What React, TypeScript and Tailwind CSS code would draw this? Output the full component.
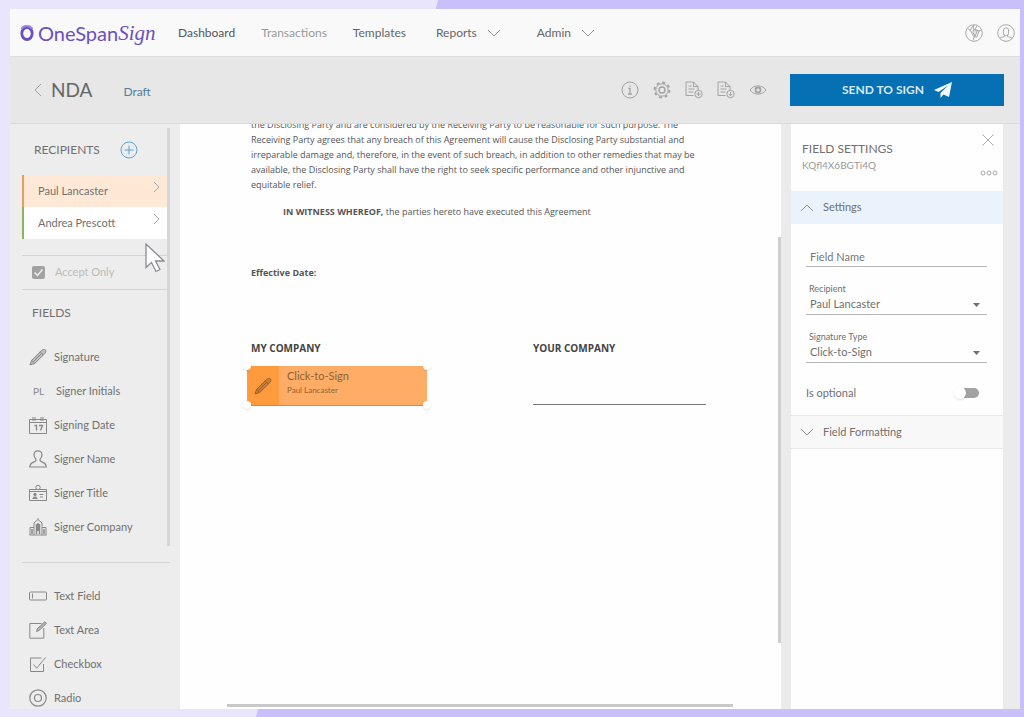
import React, { useState } from 'react';

const fieldStroke = {
  width: 18,
  height: 18,
  viewBox: '0 0 18 18',
  fill: 'none',
  stroke: 'currentColor',
  strokeWidth: 1,
  'aria-hidden': true,
} as const;

function PenIcon() {
  return (
    <svg {...fieldStroke}>
      <path d="M1 17l1.6-4.6L12.4 2.6c1.2-1.3 3.2-1.5 4-.7s.6 2.4-.8 3.9L5.8 15.4z" fill="currentColor" fillOpacity="0.45" />
      <path d="M11.2 3.8l3.2 3.2M2.6 12.4l3.2 3M4.5 13.5l8-8" />
    </svg>
  );
}

function DateIcon() {
  return (
    <svg {...fieldStroke}>
      <path d="M.5 3.5h17v14H.5zM.5 6.5h17" />
      <path d="M4 1v4M6 1v4M12 1v4M14 1v4" />
      <path d="M5.5 9.5h2v5M10 9.5h3.5l-2 5" strokeWidth="1.3" />
    </svg>
  );
}

function PersonIcon() {
  return (
    <svg {...fieldStroke} strokeWidth="1.2">
      <path d="M9 .8c-2.400 0-4 1.700-4 4 0 1.900.8 3.300 1.900 4.400.5 1.600-.6 2.300-2.300 2.900C2.300 12.900 1 13.600.7 17h16.600c-.3-3.400-1.600-4.100-3.900-4.900-1.700-.6-2.800-1.300-2.300-2.900C12.200 8.100 13 6.700 13 4.800c0-2.300-1.600-4-4-4z" />
    </svg>
  );
}

function BadgeIcon() {
  return (
    <svg {...fieldStroke}>
      <path d="M7 5.500H.5v11h17v-11H11M.5 7.500h17" />
      <circle cx="9" cy="3.500" r="2.200" />
      <path d="M7 5.500h4" />
      <circle cx="6" cy="10.500" r="1.200" fill="currentColor" />
      <path d="M3.800 14.500c0-2 4.400-2 4.400 0zM10.500 10.500h4M11 13h3" fill="currentColor" />
    </svg>
  );
}

function BuildingIcon() {
  return (
    <svg {...fieldStroke}>
      <path d="M5 17V5l4-3.500L13 5v12M9 1.500V0M1 17V9.500h4M17 17V9.500h-4M.5 17h17" />
      <path d="M7.500 6v10M9 5v8M10.500 6v10M3 11v5M15 11v5" strokeWidth="1.500" />
    </svg>
  );
}

function TextFieldIcon() {
  return (
    <svg {...fieldStroke}>
      <rect x=".5" y="5" width="17" height="8" rx="1" />
      <path d="M3.500 6.500v5" />
    </svg>
  );
}

function TextAreaIcon() {
  return (
    <svg {...fieldStroke}>
      <path d="M12.500 2.500H.8v14.700h14V7" />
      <path d="M7.500 10.500l1-3L15.800.8l1.700 1.500-7.200 7z" fill="currentColor" fillOpacity="0.6" />
    </svg>
  );
}

function CheckIcon() {
  return (
    <svg {...fieldStroke}>
      <path d="M12.500 3H1.500v13.500h13V9" />
      <path d="M4.500 9.500l3.200 3.700L16.500 2.500" />
    </svg>
  );
}

function RadioIcon() {
  return (
    <svg {...fieldStroke} strokeWidth="1.200">
      <circle cx="9" cy="9" r="8.200" />
      <circle cx="9" cy="9" r="3.500" />
    </svg>
  );
}

function Chevron({ direction }: { direction: 'up' | 'down' | 'left' | 'right' }) {
  const paths = {
    up: 'M1 9l6-6 6 6',
    down: 'M1 3l6 6 6-6',
    left: 'M9 0L3 6l6 6',
    right: 'M5 1l5 5-5 5',
  };
  return (
    <svg width="14" height="12" viewBox="0 0 14 12" fill="none" stroke="currentColor" aria-hidden="true">
      <path d={paths[direction]} />
    </svg>
  );
}

function DocIcon({ down }: { down?: boolean }) {
  return (
    <svg {...fieldStroke}>
      <path d="M8.500 14.500H1V1h7.500L13 5.500V9M8.500 1v4.500H13M3.500 5h3M3.500 8h6M3.500 11h5" />
      <circle cx="13.500" cy="13" r="3.700" />
      <path d={down ? 'M13.500 11v3.500M12 13l1.500 1.700L15 13' : 'M11.500 13h4M13.500 11v4'} />
    </svg>
  );
}

const signerFields = [
  { label: 'Signature', icon: <PenIcon /> },
  { label: 'Signer Initials', icon: null },
  { label: 'Signing Date', icon: <DateIcon /> },
  { label: 'Signer Name', icon: <PersonIcon /> },
  { label: 'Signer Title', icon: <BadgeIcon /> },
  { label: 'Signer Company', icon: <BuildingIcon /> },
];

const inputFields = [
  { label: 'Text Field', icon: <TextFieldIcon /> },
  { label: 'Text Area', icon: <TextAreaIcon /> },
  { label: 'Checkbox', icon: <CheckIcon /> },
  { label: 'Radio', icon: <RadioIcon /> },
];

function FieldList({ items }: { items: { label: string; icon: React.ReactNode }[] }) {
  return (
    <ul>
      {items.map((item) => (
        <li key={item.label}>
          <button type="button" className="flex h-[34px] w-full items-center gap-[7px] pl-[19px] text-left">
            <span className="text-[#888]">
              {item.icon ?? <span className="block w-5 pl-1 text-[10px]">PL</span>}
            </span>
            <span>{item.label}</span>
          </button>
        </li>
      ))}
    </ul>
  );
}

function TopBar() {
  return (
    <header className="flex h-12 shrink-0 items-center border-b border-[#dedede] bg-[#f9f9f9] text-[12px] text-[#666]">
      <a href="#home" className="flex w-[168px] items-center pl-[10px] text-[#6a50bd]">
        <svg width="14" height="18" viewBox="0 0 14 18" fill="none" aria-hidden="true">
          <ellipse cx="7" cy="9.500" rx="5.200" ry="6" stroke="currentColor" strokeWidth="2.800" />
          <path d="M1.500 5C3 1.500 9.500.5 12.500 5" stroke="#9b86dc" strokeWidth="2" />
        </svg>
        <span className="pl-1 text-[20px] leading-6">OneSpan</span>
        <span className="font-['Liberation_Serif',serif] text-[21px] leading-6 italic">Sign</span>
      </a>
      <nav className="flex flex-1 items-center">
        <a href="#dashboard" className="mr-[26px] text-[#555]">Dashboard</a>
        <a href="#transactions" className="mr-[26px] text-[#999]">Transactions</a>
        <a href="#templates" className="mr-[30px]">Templates</a>
        <button type="button" className="mr-9 flex items-center gap-[10px]">
          Reports <span className="text-[#999]"><Chevron direction="down" /></span>
        </button>
        <button type="button" className="flex items-center gap-[10px]">
          Admin <span className="text-[#999]"><Chevron direction="down" /></span>
        </button>
      </nav>
      <div className="flex gap-[14px] pr-[5px] text-[#aaa]">
        <button type="button" aria-label="Language">
          <svg {...fieldStroke}>
            <circle cx="9" cy="9" r="8.300" />
            <path d="M2.500 4.500L5 6l2 3.500L9 13l-1 3.500M5 6l3-4M9 1l-1 3.500 2 1 2-3.500M10 5.500l4 1.500 2.500-1M14 7l-2 6-3 0" />
            <path d="M8.500 5.500l4 1-2.500 6-2-4z" fill="currentColor" fillOpacity="0.3" />
          </svg>
        </button>
        <button type="button" aria-label="Account">
          <svg {...fieldStroke}>
            <circle cx="9" cy="9" r="8.300" />
            <rect x="6.500" y="4" width="5" height="7.500" rx="2" />
            <path d="M3 14.500c1-1.500 3-1.500 4.500-2V11M15 14.500c-1-1.500-3-1.500-4.500-2V11" />
          </svg>
        </button>
      </div>
    </header>
  );
}

function TransactionBar() {
  return (
    <div className="flex h-[67px] shrink-0 items-center border-b border-[#dadada] bg-[#e7e7e7] pr-4 pl-[22px] text-[#a2a2a2]">
      <button type="button" aria-label="Back">
        <Chevron direction="left" />
      </button>
      <h1 className="pl-[5px] text-[19px] text-[#666]">NDA</h1>
      <span className="flex-1 pt-1 pl-[31px] text-[12px] text-[#4f7f9f]">Draft</span>
      <div className="mr-[23px] flex gap-[14px]">
        <button type="button" aria-label="Information">
          <svg {...fieldStroke}>
            <circle cx="9" cy="9" r="8" />
            <path d="M7.500 7.500H9V13M7 13h4M9 4.500v1.300" strokeWidth="1.300" />
          </svg>
        </button>
        <button type="button" aria-label="Settings">
          <svg {...fieldStroke}>
            <circle cx="9" cy="9" r="7.500" strokeWidth="1.800" strokeDasharray="2.950 2.940" />
            <circle cx="9" cy="9" r="6.200" />
            <circle cx="9" cy="9" r="3" strokeWidth="1.400" />
          </svg>
        </button>
        <button type="button" aria-label="Add document"><DocIcon /></button>
        <button type="button" aria-label="Download document"><DocIcon down /></button>
        <button type="button" aria-label="Preview">
          <svg {...fieldStroke}>
            <path d="M1 9c4-5.500 12-5.500 16 0-4 5.500-12 5.500-16 0z" />
            <circle cx="9" cy="9" r="2.500" strokeWidth="1.800" />
          </svg>
        </button>
      </div>
      <button
        type="button"
        className="flex h-8 w-[214px] items-center justify-center gap-[10px] bg-[#0570b4] text-[12px] font-bold text-[#d9eaf6]"
      >
        SEND TO SIGN
        <svg width="18" height="16" viewBox="0 0 18 16" fill="#f4f9fd" aria-hidden="true">
          <path d="M18 0L0 8l4.500 2L14 3.500 6.500 11v5l3-3.500L15 15z" />
        </svg>
      </button>
    </div>
  );
}

function Sidebar() {
  const [selected, setSelected] = useState('Paul Lancaster');
  const recipients = [
    { name: 'Paul Lancaster', className: 'border-[#e2a05c]' },
    { name: 'Andrea Prescott', className: 'border-[#88b65f]' },
  ];

  return (
    <aside className="relative w-[170px] shrink-0 overflow-hidden bg-[#ededed] text-[11px] text-[#707070]">
      <div className="flex h-[51px] items-center gap-5 pl-6">
        <h2 className="text-[12px]">RECIPIENTS</h2>
        <button type="button" aria-label="Add recipient" className="text-[#5ba5d8]">
          <svg {...fieldStroke}>
            <circle cx="9" cy="9" r="8" />
            <path d="M9 4.500v9M4.500 9h9" />
          </svg>
        </button>
      </div>
      <div className="mr-3 ml-3">
        {recipients.map((r) => (
          <button
            key={r.name}
            type="button"
            onClick={() => setSelected(r.name)}
            className={`flex h-8 w-full items-center justify-between border-l-2 pr-[5px] pl-[14px] ${r.className} ${
              selected === r.name ? 'bg-[#ffe9d6]' : 'bg-white'
            }`}
          >
            {r.name}
            <span className="pb-2 text-[#aaa]"><Chevron direction="right" /></span>
          </button>
        ))}
      </div>
      <label className="mt-4 mr-[10px] ml-3 flex h-[35px] items-center gap-[10px] border-y border-[#d4d4d6] pl-[10px] text-[#bbb]">
        <span className="relative h-[13px] w-[13px]">
          <input type="checkbox" defaultChecked className="block h-[13px] w-[13px] appearance-none rounded-[2px] bg-[#a2a2a2]" />
          <svg width="13" height="13" viewBox="0 0 13 13" className="absolute inset-0" fill="none" stroke="#eee" strokeWidth="1.500" aria-hidden="true">
            <path d="M2.500 6.500l3 3 5-6" />
          </svg>
        </span>
        Accept Only
      </label>
      <h2 className="flex h-[50px] items-center pb-1 pl-[22px] text-[12px]">FIELDS</h2>
      <FieldList items={signerFields} />
      <hr className="mt-[18px] mr-[10px] mb-4 ml-3 border-[#d4d4d6]" />
      <FieldList items={inputFields} />

      {/* scroll thumb */}
      <div className="absolute top-1 right-[10px] h-[418px] w-[3px] bg-[#d6d6d6]" />
      {/* mouse pointer */}
      <svg width="20" height="30" viewBox="0 0 20 30" className="absolute top-[119px] left-[135px]" aria-hidden="true">
        <path d="M1 1v23.500l5.500-5 4.500 9 4-2-4.500-8.500H19z" fill="#fff" stroke="#8b8b93" strokeWidth="1.300" />
      </svg>
    </aside>
  );
}

function ResizeHandles() {
  return (
    <>
      <span className="absolute -top-1 -left-1 h-2 w-2 rounded-full bg-white shadow-sm" />
      <span className="absolute -top-1 -right-1 h-2 w-2 rounded-full bg-white shadow-sm" />
      <span className="absolute -bottom-1 -left-1 h-2 w-2 rounded-full bg-white shadow-sm" />
      <span className="absolute -right-1 -bottom-1 h-2 w-2 rounded-full bg-white shadow-sm" />
    </>
  );
}

function DocumentPage() {
  return (
    <main className="relative min-w-0 flex-1 overflow-hidden bg-[#fefefe] pl-[71px] font-['Open_Sans',sans-serif] text-[9px] leading-[15px] text-[#555]">
      <p className="-mt-[7px] whitespace-nowrap">
        the Disclosing Party and are considered by the Receiving Party to be reasonable for such purpose. The<br />
        Receiving Party agrees that any breach of this Agreement will cause the Disclosing Party substantial and<br />
        irreparable damage and, therefore, in the event of such breach, in addition to other remedies that may be<br />
        available, the Disclosing Party shall have the right to seek specific performance and other injunctive and<br />
        equitable relief.
      </p>
      <p className="mt-3 pl-8">
        <strong>IN WITNESS WHEREOF,</strong> the parties hereto have executed this Agreement
      </p>
      <p className="mt-[46px] font-bold">Effective Date:</p>
      <div className="mt-[61px] flex text-[10px] font-bold text-[#444]">
        <div className="w-[282px]">
          <p>MY COMPANY</p>
          <button
            type="button"
            className="relative -ml-1 mt-[10px] flex h-10 w-[180px] rounded-[4px] border-b border-[#d08a4c] bg-[#ffad66] text-left font-['Lato',sans-serif] font-normal text-[#8b6238]"
          >
            <span className="flex h-full w-8 items-center justify-center rounded-l-[4px] bg-[#ff9a3d] text-[#8f6030]">
              <PenIcon />
            </span>
            <span className="pt-[2px] pl-2">
              <span className="block text-[11px] leading-[15px]">Click-to-Sign</span>
              <span className="block text-[8px] leading-[15px]">Paul Lancaster</span>
            </span>
            <ResizeHandles />
          </button>
        </div>
        <div className="h-[64px] w-[173px] border-b border-[#777]">YOUR COMPANY</div>
      </div>

      {/* scroll thumbs */}
      <div className="absolute top-[113px] right-0 h-[406px] w-[3px] bg-[#cfcfcf]" />
      <div className="absolute right-12 bottom-[2px] left-[47px] h-[3px] bg-[#c9c9c9]" />
    </main>
  );
}

function SelectField({ id, label, value }: { id: string; label: string; value: string }) {
  return (
    <div className="mt-4 flex flex-col">
      <label htmlFor={id} className="pl-[3px] text-[9px] leading-3">{label}</label>
      <div className="relative">
        <select id={id} defaultValue={value} className="block h-5 w-full appearance-none border-b border-[#b5b5b5] bg-transparent pl-1 text-[11px]">
          <option>{value}</option>
        </select>
        <svg width="7" height="4" viewBox="0 0 7 4" fill="currentColor" className="pointer-events-none absolute top-2 right-[7px]" aria-hidden="true">
          <path d="M0 0h7L3.500 4z" />
        </svg>
      </div>
    </div>
  );
}

function SettingsPanel() {
  return (
    <aside className="mr-[17px] ml-[10px] w-[212px] shrink-0 bg-[#fefefe] text-[11px] text-[#707070]">
      <div className="flex h-[67px] justify-between pr-[5px] pl-[11px]">
        <div className="pt-4">
          <h2 className="text-[12px] leading-[17px]">FIELD SETTINGS</h2>
          <p className="text-[10px] leading-4 text-[#999]">KQfl4X6BGTi4Q</p>
        </div>
        <div className="flex flex-col items-end gap-6 pt-[10px] text-[#aaa]">
          <button type="button" aria-label="Close" className="mr-1">
            <svg width="12" height="12" viewBox="0 0 12 12" stroke="currentColor" aria-hidden="true">
              <path d="M.5.5l11 11M11.500.5l-11 11" />
            </svg>
          </button>
          <button type="button" aria-label="More">
            <svg width="18" height="6" viewBox="0 0 18 6" fill="none" stroke="currentColor" aria-hidden="true">
              <circle cx="3" cy="3" r="2" />
              <circle cx="9" cy="3" r="2" />
              <circle cx="15" cy="3" r="2" />
            </svg>
          </button>
        </div>
      </div>
      <button type="button" className="flex h-[33px] w-full items-center gap-[9px] bg-[#eaf2fb] pl-[9px]">
        <span className="text-[#999]"><Chevron direction="up" /></span>
        Settings
      </button>
      <div className="pr-4 pl-[15px]">
        <input
          aria-label="Field Name"
          placeholder="Field Name"
          className="mt-[22px] block h-[21px] w-full border-b border-[#b5b5b5] bg-transparent pl-1 placeholder:text-[#777]"
        />
        <SelectField id="recipient" label="Recipient" value="Paul Lancaster" />
        <SelectField id="signature-type" label="Signature Type" value="Click-to-Sign" />
        <label className="flex h-[52px] items-center justify-between pt-2 pr-2">
          Is optional
          <input
            type="checkbox"
            role="switch"
            className="h-[10px] w-[22px] appearance-none rounded-full bg-[#a2a2a2] before:block before:h-[12px] before:w-[12px] before:-translate-x-[3px] before:-translate-y-px before:rounded-full before:bg-white before:shadow-sm"
          />
        </label>
      </div>
      <button type="button" className="flex h-[34px] w-full items-center gap-[9px] border-y border-[#e8e8e8] bg-[#f8f8f8] pl-[9px]">
        <span className="text-[#999]"><Chevron direction="down" /></span>
        Field Formatting
      </button>
    </aside>
  );
}

export default function App() {
  return (
    <div className="relative isolate flex h-screen flex-col bg-[#e9e5fc] pt-[9px] pr-1 pb-2 pl-[10px] font-['Lato',sans-serif]">
      <svg viewBox="0 0 1024 717" preserveAspectRatio="none" className="absolute inset-0 -z-10 h-full w-full" aria-hidden="true">
        <path d="M438 0h586v717H256z" fill="#c8bffb" />
      </svg>
      <TopBar />
      <TransactionBar />
      <div className="flex min-h-0 flex-1 bg-[#ebebeb]">
        <Sidebar />
        <DocumentPage />
        <SettingsPanel />
      </div>
    </div>
  );
}
